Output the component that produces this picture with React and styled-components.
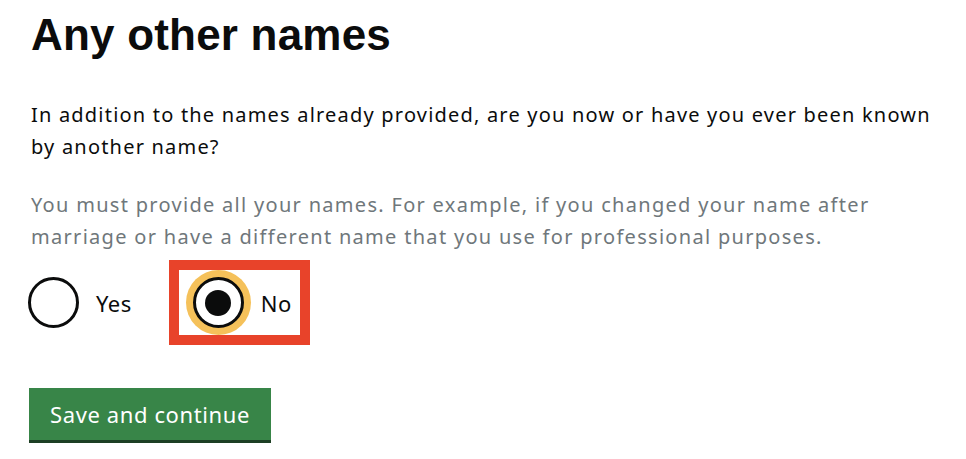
import React from "react";
import styled, { createGlobalStyle } from "styled-components";

const GlobalStyle = createGlobalStyle`
  html, body {
    margin: 0;
    padding: 0;
    background: #ffffff;
  }
  body {
    font-family: "Noto Sans", "Liberation Sans", Arial, sans-serif;
    color: #0b0c0c;
  }
`;

const Page = styled.main`
  width: 966px;
  height: 459px;
  padding: 9px 0 0 31px;
  box-sizing: border-box;
  overflow: hidden;
`;

const Heading = styled.h1`
  margin: 0;
  font-family: "Liberation Sans", Arial, sans-serif;
  font-size: 44px;
  line-height: 52px;
  font-weight: 700;
  letter-spacing: 0.2px;
`;

const Question = styled.p`
  margin: 38px 0 0;
  font-size: 20px;
  line-height: 32px;
  letter-spacing: 1.2px;
  max-width: 915px;
`;

const Hint = styled.p`
  margin: 26px 0 0;
  font-size: 20px;
  line-height: 32px;
  letter-spacing: 1.3px;
  color: #6f777b;
  max-width: 880px;
`;

const Radios = styled.div`
  display: flex;
  align-items: center;
  margin-top: 7px;
  margin-left: -3px;
`;

const Option = styled.label`
  display: flex;
  align-items: center;
  gap: 17px;
  font-size: 22px;
  letter-spacing: 0.5px;
  ${(p) =>
    p.$marked
      ? `
    border: 10px solid #e8432a;
    padding: 7px 8px 7px 14px;
    margin-left: 37px;
  `
      : ""}
`;

const Circle = styled.span`
  width: 51px;
  height: 51px;
  box-sizing: border-box;
  border: 3px solid #0b0c0c;
  border-radius: 50%;
  display: flex;
  align-items: center;
  justify-content: center;
  background: #fff;
  box-shadow: ${(p) => (p.$focus ? "0 0 0 7px #f5c15a" : "none")};
`;

const Dot = styled.span`
  width: 26px;
  height: 26px;
  border-radius: 50%;
  background: #0b0c0c;
`;

const Button = styled.button`
  margin-top: 43px;
  margin-left: -2px;
  display: block;
  background: #388548;
  color: #ffffff;
  border: 0;
  border-radius: 0;
  box-shadow: 0 3px 0 #1d3f24;
  font-family: "Noto Sans", "Liberation Sans", Arial, sans-serif;
  font-size: 22px;
  line-height: 28px;
  letter-spacing: 0.6px;
  padding: 12px 0;
  width: 242px;
  text-align: center;
`;

export default function App() {
  return (
    <>
      <GlobalStyle />
      <Page>
        <Heading>Any other names</Heading>
        <Question>
          In addition to the names already provided, are you now or have you ever been known by another name?
        </Question>
        <Hint>
          You must provide all your names. For example, if you changed your name after marriage or have a different name that you use for professional purposes.
        </Hint>
        <Radios>
          <Option>
            <Circle />
            Yes
          </Option>
          <Option $marked>
            <Circle $focus>
              <Dot />
            </Circle>
            No
          </Option>
        </Radios>
        <Button>Save and continue</Button>
      </Page>
    </>
  );
}
